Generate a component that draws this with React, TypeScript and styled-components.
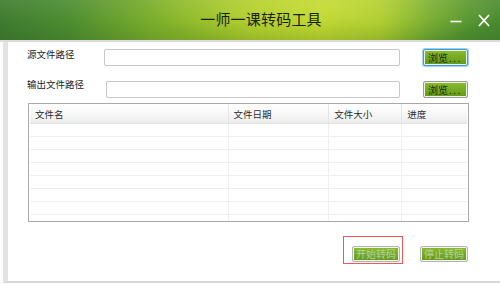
import React from 'react'
import styled, { createGlobalStyle } from 'styled-components'

const GlobalStyle = createGlobalStyle`
  html, body { margin: 0; padding: 0; background: #fff; }
  body { font-family: "Noto Sans CJK SC", "Noto Sans", sans-serif; }
`

const columns = [
  { title: '文件名', width: 200 },
  { title: '文件日期', width: 101 },
  { title: '文件大小', width: 73 },
  { title: '进度', width: 65 },
]

const App: React.FC = () => {
  return (
    <Window>
      <GlobalStyle />
      <TitleBar>
        <span />
        <Title>一师一课转码工具</Title>
        <Controls>
          <svg width="12" height="12" viewBox="0 0 12 12">
            <line x1="0.5" y1="6.5" x2="11.5" y2="6.5" stroke="#fff" strokeWidth="1.6" />
          </svg>
          <svg width="12" height="13" viewBox="0 0 12 13">
            <path d="M1 1 L11 12 M11 1 L1 12" stroke="#fff" strokeWidth="1.7" fill="none" />
          </svg>
        </Controls>
      </TitleBar>

      <Body>
        <Row>
          <Label $lift={1}>源文件路径</Label>
          <PathInput $offset={0} />
          <Browse $focused>浏览<Dots>...</Dots></Browse>
        </Row>
        <Row $top={15}>
          <Label $lift={3}>输出文件路径</Label>
          <PathInput $offset={2} />
          <Browse>浏览<Dots>...</Dots></Browse>
        </Row>

        <FileTable>
          <HeadRow>
            {columns.map(c => (
              <HeadCell key={c.title} $w={c.width}>{c.title}</HeadCell>
            ))}
          </HeadRow>
          {Array.from({ length: 8 }).map((_, i) => (
            <DataRow key={i}>
              {columns.map(c => (
                <DataCell key={c.title} $w={c.width} />
              ))}
            </DataRow>
          ))}
        </FileTable>

        <Actions>
          <Marked>
            <ActionButton>开始转码</ActionButton>
          </Marked>
          <ActionButton>停止转码</ActionButton>
        </Actions>
      </Body>
    </Window>
  )
}

const Window = styled.div`
  width: 500px;
  height: 284px;
  display: flex;
  flex-direction: column;
  overflow: hidden;
  background: #fff;
`

const TitleBar = styled.div`
  height: 40px;
  flex: none;
  display: grid;
  grid-template-columns: 1fr auto 1fr;
  align-items: center;
  border-bottom: 2px solid #dcdcdc;
  background:
    radial-gradient(ellipse 260px 60px at 330px 6px, rgba(230, 240, 80, 0.35), rgba(230, 240, 80, 0) 70%),
    linear-gradient(180deg, rgba(255, 255, 255, 0.08) 0%, rgba(0, 0, 0, 0) 50%, rgba(0, 40, 0, 0.12) 100%),
    linear-gradient(90deg, #3f7c30 0%, #4e8e31 14%, #7fb12b 32%, #a9c92a 50%, #b6d12c 64%, #a4c62c 76%, #6aa530 86%, #4f9131 94%, #4a8b30 100%);
`

const Title = styled.div`
  margin-left: 22px;
  margin-top: -4px;
  font-size: 15px;
  letter-spacing: 0.2px;
  color: #1b1f0a;
`

const Controls = styled.div`
  display: flex;
  justify-content: flex-end;
  align-items: center;
  gap: 16px;
  padding-right: 10px;
  margin-top: 1px;
  svg { display: block; }
`

const Body = styled.div`
  flex: 1;
  margin-left: 3px;
  margin-bottom: 1px;
  border-left: 5px solid #e3e3e3;
  border-bottom: 2px solid #d6d6d6;
  padding: 7px 0 0 19px;
  display: flex;
  flex-direction: column;
  font-size: 9.5px;
  color: #222;
`

const Row = styled.div<{ $top?: number }>`
  display: flex;
  align-items: flex-start;
  height: 17px;
  margin-top: ${p => p.$top ?? 0}px;
`

const Label = styled.div<{ $lift: number }>`
  width: 77px;
  flex: none;
  line-height: 12px;
  margin-top: ${p => -p.$lift}px;
  white-space: nowrap;
`

const PathInput = styled.div<{ $offset: number }>`
  box-sizing: border-box;
  width: ${p => 296 - p.$offset}px;
  height: 17px;
  margin-left: ${p => p.$offset}px;
  border: 1px solid #c6c6c6;
  border-radius: 2px;
  background: #fff;
`

const greenFill = `
  background: linear-gradient(180deg, #8cbd30 0%, #74aa24 50%, #62981b 100%);
`

const Browse = styled.div<{ $focused?: boolean }>`
  box-sizing: border-box;
  width: 45px;
  height: 17px;
  margin-left: 23px;
  padding-left: 4px;
  border: 1px solid ${p => (p.$focused ? '#3d9de2' : '#9b9b9b')};
  border-radius: 2px;
  box-shadow: ${p => (p.$focused ? '0 0 0 1px #9fd0f2,' : '')} inset 0 0 0 1px #eef3e4;
  ${greenFill}
  color: #1c2808;
  font-size: 10px;
  line-height: 15px;
  white-space: nowrap;
`

const Dots = styled.span`
  letter-spacing: 1.5px;
  margin-left: 1px;
`

const FileTable = styled.div`
  box-sizing: border-box;
  width: 441px;
  height: 119px;
  margin: 5px 0 0 1px;
  border: 1px solid #a9a9a9;
  padding: 0 1px;
  overflow: hidden;
  background: #fff;
`

const HeadRow = styled.div`
  display: flex;
  height: 19px;
  background: linear-gradient(180deg, #ffffff 0%, #f6f6f6 60%, #ececec 100%);
  border-bottom: 1px solid #e2e2e2;
`

const HeadCell = styled.div<{ $w: number }>`
  box-sizing: border-box;
  width: ${p => p.$w}px;
  padding-left: 5px;
  line-height: 20px;
  color: #2a2a2a;
  border-right: 1px solid #e4e4e4;
  &:first-child { width: ${p => p.$w - 1}px; }
  &:last-child { border-right: none; }
`

const DataRow = styled.div`
  display: flex;
  height: 12px;
  border-bottom: 1px solid #efefef;
`

const DataCell = styled.div<{ $w: number }>`
  box-sizing: border-box;
  width: ${p => p.$w}px;
  border-right: 1px solid #efefef;
  &:first-child { width: ${p => p.$w - 1}px; }
  &:last-child { border-right: none; }
`

const Actions = styled.div`
  display: flex;
  justify-content: flex-end;
  gap: 20px;
  margin-top: 24px;
  padding-right: 32px;
`

const Marked = styled.div`
  position: relative;
  display: flex;
  &::after {
    content: '';
    position: absolute;
    left: -9px;
    top: -10px;
    right: -3px;
    bottom: -2px;
    border: 1px solid #f0585a;
    pointer-events: none;
  }
`

const ActionButton = styled.div`
  box-sizing: border-box;
  width: 48px;
  height: 16px;
  border: 1px solid #b4b4b4;
  border-radius: 2px;
  box-shadow: inset 0 0 0 1px #f2f5ec;
  ${greenFill}
  color: #b9d19a;
  font-size: 10px;
  line-height: 14px;
  text-align: center;
  white-space: nowrap;
`

export default App
